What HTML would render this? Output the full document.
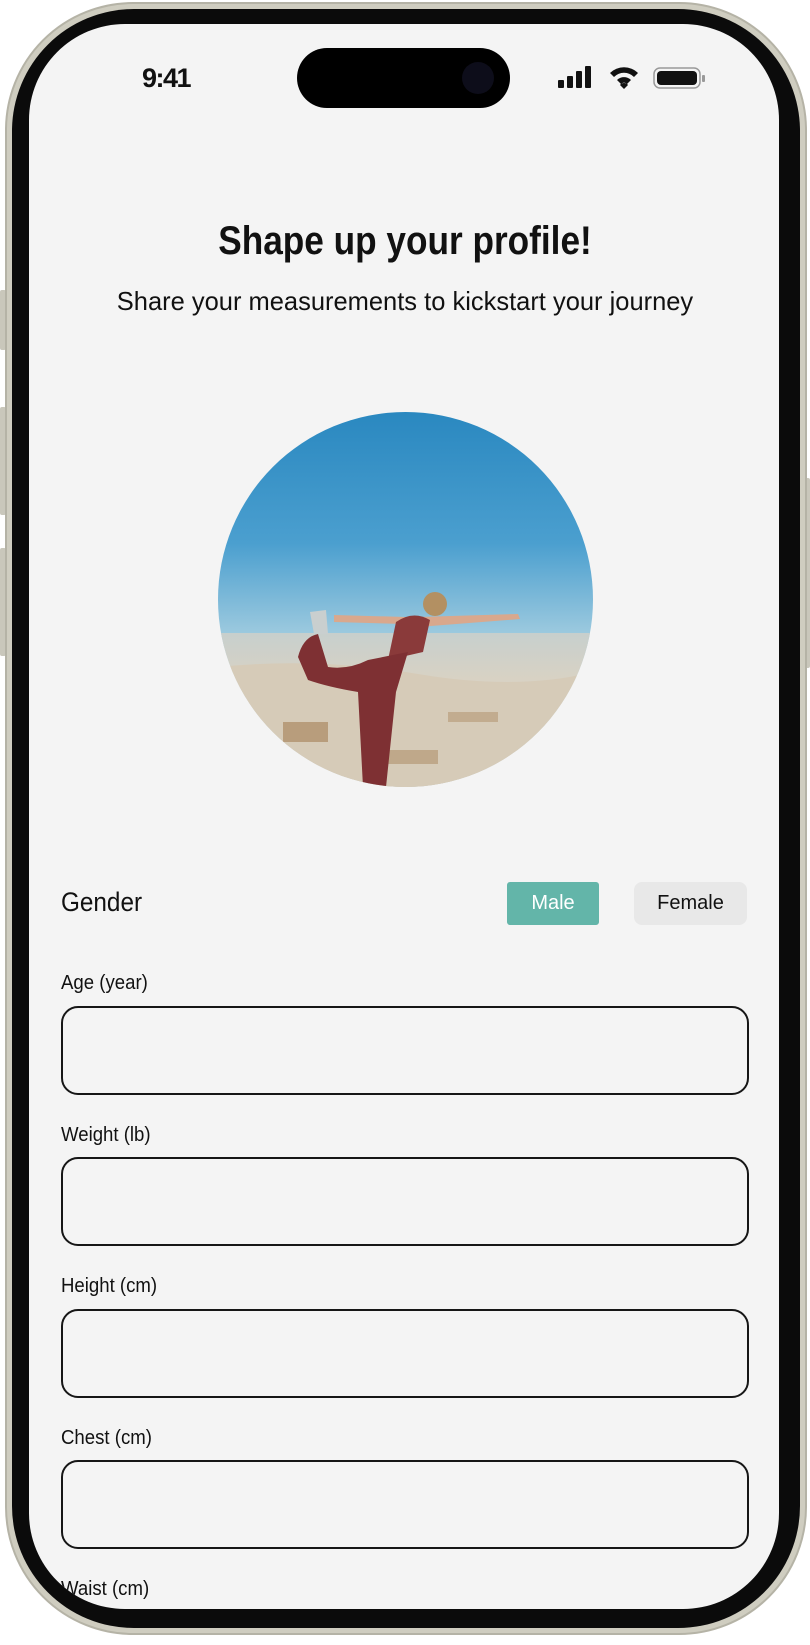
<!DOCTYPE html>
<html><head><meta charset="utf-8"><style>
*{margin:0;padding:0;box-sizing:border-box}
html,body{width:810px;height:1645px;background:#fff;overflow:hidden}
body{position:relative;font-family:"Liberation Sans",sans-serif;color:#111}
.bez{position:absolute;left:5px;top:2px;width:802px;height:1633px;border-radius:128px;background:#cfcdc0;border:2px solid #b5b3a6}
.blk{position:absolute;left:12px;top:9px;width:788px;height:1619px;border-radius:122px;background:#0b0b0b}
.scr{position:absolute;left:29px;top:24px;width:750px;height:1585px;border-radius:96px;background:#f4f4f4;overflow:hidden}
.in{position:absolute;left:-29px;top:-24px;width:810px;height:1645px}
.btn{position:absolute;background:#c9c7bb;border-radius:2px}
.island{position:absolute;left:297px;top:48px;width:213px;height:60px;border-radius:30px;background:#000}
.cam{position:absolute;left:462px;top:62px;width:32px;height:32px;border-radius:50%;background:#0d0d1a}
.abs{position:absolute}
.lbl{position:absolute;left:61px;font-size:20px;transform:scaleX(.93);transform-origin:0 0}
.box{position:absolute;left:61px;width:688px;height:89px;border:2px solid #161616;border-radius:17px}
</style></head><body>
<div class="btn" style="left:0;top:290px;width:6px;height:60px"></div>
<div class="btn" style="left:0;top:407px;width:6px;height:108px"></div>
<div class="btn" style="left:0;top:548px;width:6px;height:108px"></div>
<div class="btn" style="left:804px;top:478px;width:6px;height:190px"></div>
<div class="bez"></div>
<div class="blk"></div>
<div class="scr"><div class="in">
<div class="abs" style="left:142px;top:63px;font:bold 27px 'Liberation Sans',sans-serif;letter-spacing:-1.5px">9:41</div>
<svg class="abs" style="left:558px;top:64px" width="150" height="28" viewBox="0 0 150 28">
<rect x="0" y="16" width="6" height="8" rx="1" fill="#111"/><rect x="9" y="12" width="6" height="12" rx="1" fill="#111"/><rect x="18" y="7" width="6" height="17" rx="1" fill="#111"/><rect x="27" y="2" width="6" height="22" rx="1" fill="#111"/>
<path d="M52 9 A20 20 0 0 1 80 9 L76 13 A14 14 0 0 0 56 13Z M59 16 A10 10 0 0 1 73 16 L69 20 A4 4 0 0 0 63 20Z M66 25 L62 21 A5 5 0 0 1 70 21Z" fill="#111"/>
<rect x="96" y="4" width="46" height="20" rx="6" fill="none" stroke="#999" stroke-width="1.5"/><rect x="99" y="7" width="40" height="14" rx="4" fill="#111"/><rect x="144" y="11" width="3" height="7" rx="1" fill="#999"/>
</svg>
<div class="abs" style="left:0;width:810px;top:219px;text-align:center;font-size:40px;font-weight:bold;transform:scaleX(.88)">Shape up your profile!</div>
<div class="abs" style="left:0;width:810px;top:286px;text-align:center;font-size:26px;transform:scaleX(.98)">Share your measurements to kickstart your journey</div>
<svg class="abs" style="left:218px;top:412px" width="375" height="375" viewBox="0 0 375 375">
<defs><clipPath id="c"><circle cx="187.5" cy="187.5" r="187.5"/></clipPath>
<linearGradient id="s" x1="0" y1="0" x2="0" y2="1"><stop offset="0" stop-color="#2a88c0"/><stop offset=".35" stop-color="#4b9fcf"/><stop offset=".6" stop-color="#9fcbdf"/><stop offset=".7" stop-color="#bcd8e0"/></linearGradient>
<linearGradient id="g" x1="0" y1="0" x2="0" y2="1"><stop offset="0" stop-color="#c7cfcd"/><stop offset=".3" stop-color="#d8d2c4"/><stop offset="1" stop-color="#cfc3b1"/></linearGradient></defs>
<g clip-path="url(#c)">
<rect width="375" height="375" fill="url(#s)"/>
<rect y="221" width="375" height="154" fill="url(#g)"/>
<path d="M0 255 Q100 245 200 262 T375 260 V375 H0Z" fill="#d6cbb8"/>
<rect x="65" y="310" width="45" height="20" fill="#b89d7c"/>
<rect x="160" y="338" width="60" height="14" fill="#bfa88a"/>
<rect x="230" y="300" width="50" height="10" fill="#c2ac8f"/>
<path d="M116 203 L188 205 L186 212 L116 210Z M200 205 L300 202 L302 207 L200 215Z" fill="#d9a88d"/>
<path d="M178 210 Q195 198 212 208 L205 240 L170 248 Z" fill="#8a3a3a"/>
<circle cx="217" cy="192" r="12" fill="#b39062"/>
<path d="M150 248 L190 240 L178 280 L168 375 L145 375 L140 280 Q110 275 90 268 L80 245 Q85 225 100 222 L110 255 Q130 258 150 248Z" fill="#7e3033"/>
<path d="M92 200 L108 198 L110 222 L96 222Z" fill="#c9cfcf"/>
</g></svg>
<div class="abs" style="left:61px;top:887px;font-size:27px;transform:scaleX(.9);transform-origin:0 0">Gender</div>
<div class="abs" style="left:507px;top:882px;width:92px;height:43px;background:#63b5a9;border-radius:3px;color:#fff;font-size:20px;text-align:center;line-height:43px">Male</div>
<div class="abs" style="left:634px;top:882px;width:113px;height:43px;background:#e8e8e8;border-radius:8px;font-size:20px;text-align:center;line-height:43px">Female</div>
<div class="lbl" style="top:972px">Age (year)</div><div class="box" style="top:1006px"></div>
<div class="lbl" style="top:1124px">Weight (lb)</div><div class="box" style="top:1157px"></div>
<div class="lbl" style="top:1275px">Height (cm)</div><div class="box" style="top:1309px"></div>
<div class="lbl" style="top:1427px">Chest (cm)</div><div class="box" style="top:1460px"></div>
<div class="lbl" style="top:1578px">Waist (cm)</div><div class="box" style="top:1612px"></div>
</div></div>
<div class="island"></div><div class="cam"></div>
</body></html>
